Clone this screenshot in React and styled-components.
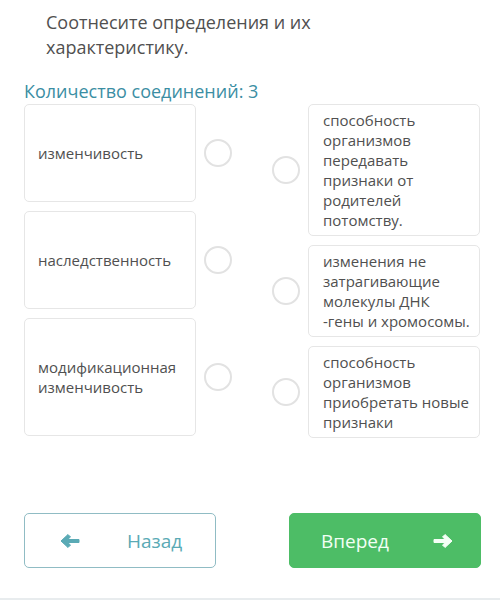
import React from "react";
import styled, { createGlobalStyle } from "styled-components";

const Global = createGlobalStyle`
  html, body { margin: 0; padding: 0; background: #fff; }
  body { font-family: "Open Sans", "Noto Sans", sans-serif; }
`;

const Page = styled.div`
  width: 500px;
  height: 600px;
  box-sizing: border-box;
  padding: 10px 19px 0 24px;
  border-bottom: 2px solid #e8ecee;
  display: flex;
  flex-direction: column;
`;

const Title = styled.h1`
  margin: 0 0 0 22px;
  font-size: 18px;
  line-height: 25px;
  font-weight: 400;
  color: #505050;
`;

const Count = styled.div`
  margin-top: 19px;
  font-size: 18px;
  line-height: 24px;
  color: #3b8ea3;
`;

const Board = styled.div`
  margin-top: 1px;
  display: grid;
  grid-template-columns: 208px 209px;
  justify-content: space-between;
`;

const Column = styled.div`
  display: flex;
  flex-direction: column;
  gap: 9px;
`;

const Row = styled.div`
  display: flex;
  align-items: center;
  gap: 8px;
`;

const Card = styled.div`
  width: 172px;
  box-sizing: border-box;
  border: 1px solid #e6e6e6;
  border-radius: 5px;
  background: #fff;
  padding: ${(p) => (p.$left ? "38px 12px 38px 13px" : "5px 4px 5px 14px")};
  font-size: 15px;
  line-height: 20px;
  color: #505050;
  white-space: ${(p) => (p.$left ? "normal" : "nowrap")};
`;

const Circle = styled.div`
  width: 28px;
  height: 28px;
  box-sizing: border-box;
  border: 2px solid #e2e2e2;
  border-radius: 50%;
  flex: none;
`;

const Footer = styled.div`
  margin-top: 75px;
  display: flex;
  justify-content: space-between;
`;

const Button = styled.button`
  width: 192px;
  height: 55px;
  box-sizing: border-box;
  border-radius: 5px;
  font-family: "Open Sans", "Noto Sans", sans-serif;
  font-size: 19px;
  display: flex;
  align-items: center;
  padding: 0;
  cursor: pointer;
  border: 1px solid ${(p) => (p.$primary ? "#4dbd66" : "#90bcc4")};
  background: ${(p) => (p.$primary ? "#4dbd66" : "#fff")};
  color: ${(p) => (p.$primary ? "#f2fff4" : "#5aaab5")};
`;

const Label = styled.span`
  margin-left: ${(p) => p.$ml}px;
`;

const Arrow = ({ dir, color, ml }) => (
  <svg width="20" height="16" viewBox="0 0 20 16" style={{ marginLeft: ml }}>
    <path
      d={
        dir === "left"
          ? "M1 8 L8 1.5 L10.5 4 L7.5 6.5 H19 V9.5 H7.5 L10.5 12 L8 14.5 Z"
          : "M19 8 L12 1.5 L9.5 4 L12.5 6.5 H1 V9.5 H12.5 L9.5 12 L12 14.5 Z"
      }
      fill={color}
      strokeLinejoin="round"
      stroke={color}
      strokeWidth="1"
    />
  </svg>
);

const left = [["изменчивость"], ["наследственность"], ["модификационная", "изменчивость"]];
const right = [
  ["способность", "организмов", "передавать", "признаки от", "родителей", "потомству."],
  ["изменения не", "затрагивающие", "молекулы ДНК", "-гены и хромосомы."],
  ["способность", "организмов", "приобретать новые", "признаки"],
];

const Lines = ({ lines }) =>
  lines.map((l, j) => (
    <React.Fragment key={j}>
      {l}
      {j < lines.length - 1 && <br />}
    </React.Fragment>
  ));

export default function App() {
  return (
    <>
      <Global />
      <Page>
        <Title>
          Соотнесите определения и их
          <br />
          характеристику.
        </Title>
        <Count>Количество соединений: 3</Count>
        <Board>
          <Column>
            {left.map((lines, i) => (
              <Row key={i}>
                <Card $left>
                  <Lines lines={lines} />
                </Card>
                <Circle />
              </Row>
            ))}
          </Column>
          <Column>
            {right.map((lines, i) => (
              <Row key={i}>
                <Circle />
                <Card>
                  <Lines lines={lines} />
                </Card>
              </Row>
            ))}
          </Column>
        </Board>
        <Footer>
          <Button>
            <Arrow dir="left" color="#5aaab5" ml={35} />
            <Label $ml={47}>Назад</Label>
          </Button>
          <Button $primary>
            <Label $ml={31}>Вперед</Label>
            <Arrow dir="right" color="#f5fff6" ml={44} />
          </Button>
        </Footer>
      </Page>
    </>
  );
}
